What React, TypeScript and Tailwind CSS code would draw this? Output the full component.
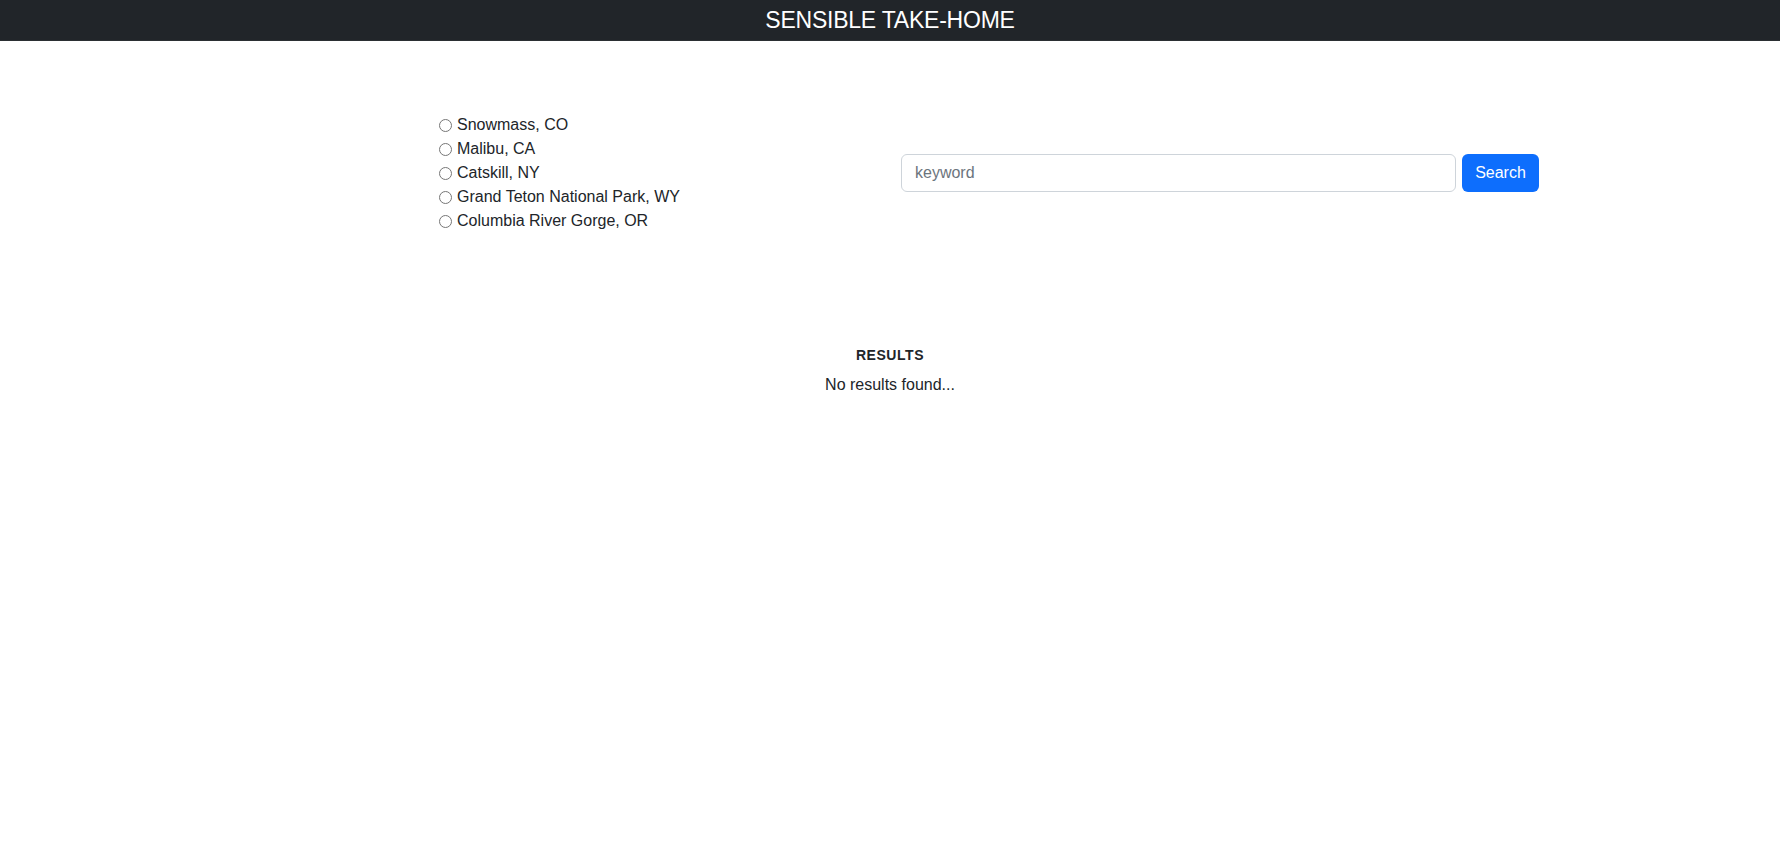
import { useState } from 'react';

const LOCATIONS = [
  'Snowmass, CO',
  'Malibu, CA',
  'Catskill, NY',
  'Grand Teton National Park, WY',
  'Columbia River Gorge, OR',
];

export default function App() {
  const [location, setLocation] = useState('');
  const [keyword, setKeyword] = useState('');

  return (
    <div className="min-h-screen bg-white font-['Liberation_Sans',Arial,sans-serif] text-[#212529]">
      <header className="flex h-[41px] items-center justify-center border-b border-[#2b2f33] bg-[#212529]">
        <h1 className="text-[23px] leading-none tracking-[-0.01em] text-white">SENSIBLE TAKE-HOME</h1>
      </header>

      <main className="pt-[72px]">
        <div className="flex items-center pl-[434px]">
          <div className="flex w-[467px] flex-col">
            {LOCATIONS.map((loc) => (
              <label key={loc} className="flex h-6 items-center text-base">
                <input
                  type="radio"
                  name="location"
                  value={loc}
                  checked={location === loc}
                  onChange={() => setLocation(loc)}
                  className="m-0 ml-[5px] mr-[5px] h-[13px] w-[13px]"
                />
                <span>{loc}</span>
              </label>
            ))}
          </div>
          <div className="flex items-center gap-[6px]">
            <input
              type="text"
              placeholder="keyword"
              value={keyword}
              onChange={(e) => setKeyword(e.target.value)}
              className="h-[38px] w-[555px] rounded-[6px] border border-[#ced4da] px-[13px] text-base text-[#212529] outline-none placeholder:text-[#6c757d]"
            />
            <button className="h-[38px] w-[77px] rounded-[6px] bg-[#0d6efd] text-base text-white">Search</button>
          </div>
        </div>

        <section className="mt-[112px] flex flex-col items-center">
          <h2 className="text-sm font-bold leading-5 tracking-[0.04em]">RESULTS</h2>
          <p className="mt-[8px] text-base leading-6">No results found...</p>
        </section>
      </main>
    </div>
  );
}
